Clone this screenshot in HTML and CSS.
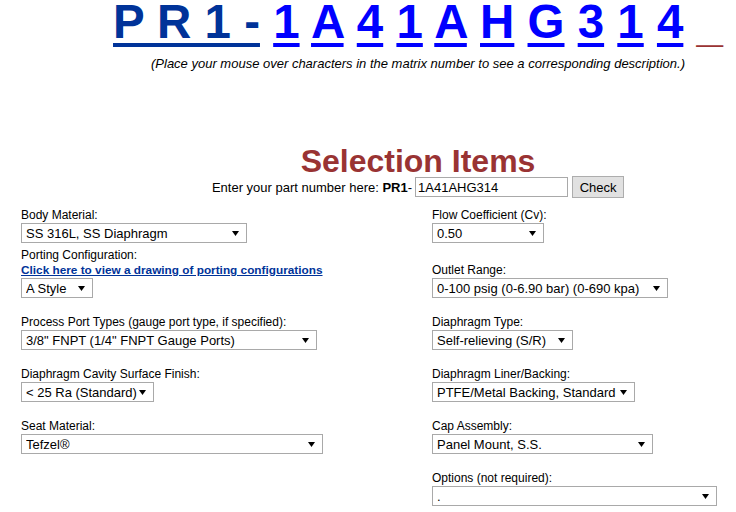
FILE: index.html
```html
<!DOCTYPE html>
<html lang="en">
<head>
    <meta charset="UTF-8">
    <meta name="viewport" content="width=device-width, initial-scale=1.0">
    <title>PR1 Part Number Builder</title>
    <link rel="stylesheet" href="styles.css">
</head>
<body>
    <div class="page">
        <div class="head">
            <div class="matrix">
                <a class="prefix" href="#">P R 1 -</a>
                <a class="ch" href="#">1</a>
                <a class="ch" href="#">A</a>
                <a class="ch" href="#">4</a>
                <a class="ch" href="#">1</a>
                <a class="ch" href="#">A</a>
                <a class="ch" href="#">H</a>
                <a class="ch" href="#">G</a>
                <a class="ch" href="#">3</a>
                <a class="ch" href="#">1</a>
                <a class="ch" href="#">4</a>
                <span class="blank">_</span>
            </div>
            <p class="hint">(Place your mouse over characters in the matrix number to see a corresponding description.)</p>

            <h1 class="title">Selection Items</h1>
            <form class="part-row">
                <span class="part-label">Enter your part number here: <b>PR1</b>-</span>
                <input class="part-input" type="text" value="1A41AHG314">
                <button class="check-button" type="button">Check</button>
            </form>
        </div>

        <div class="options">
            <div class="row first">
                <div class="cell">
                    <label>Body Material:</label>
                    <select class="sel-body"><option>SS 316L, SS Diaphragm</option></select>
                </div>
                <div class="cell">
                    <label>Flow Coefficient (Cv):</label>
                    <select class="sel-flow"><option>0.50</option></select>
                </div>
            </div>
            <div class="row tight">
                <div class="cell">
                    <label>Porting Configuration:</label>
                    <a class="drawing-link" href="#">Click here to view a drawing of porting configurations</a>
                    <select class="sel-style"><option>A Style</option></select>
                </div>
                <div class="cell">
                    <label>Outlet Range:</label>
                    <select class="sel-outlet"><option>0-100 psig (0-6.90 bar) (0-690 kpa)</option></select>
                </div>
            </div>
            <div class="row">
                <div class="cell">
                    <label>Process Port Types (gauge port type, if specified):</label>
                    <select class="sel-port"><option>3/8" FNPT (1/4" FNPT Gauge Ports)</option></select>
                </div>
                <div class="cell">
                    <label>Diaphragm Type:</label>
                    <select class="sel-type"><option>Self-relieving (S/R)</option></select>
                </div>
            </div>
            <div class="row">
                <div class="cell">
                    <label>Diaphragm Cavity Surface Finish:</label>
                    <select class="sel-finish"><option>&lt; 25 Ra (Standard)</option></select>
                </div>
                <div class="cell">
                    <label>Diaphragm Liner/Backing:</label>
                    <select class="sel-liner"><option>PTFE/Metal Backing, Standard</option></select>
                </div>
            </div>
            <div class="row">
                <div class="cell">
                    <label>Seat Material:</label>
                    <select class="sel-seat"><option>Tefzel&reg;</option></select>
                </div>
                <div class="cell">
                    <label>Cap Assembly:</label>
                    <select class="sel-cap"><option>Panel Mount, S.S.</option></select>
                </div>
            </div>
            <div class="row">
                <div class="cell"></div>
                <div class="cell">
                    <label>Options (not required):</label>
                    <select class="sel-options"><option>.</option></select>
                </div>
            </div>
        </div>
    </div>
</body>
</html>
```

FILE: styles.css
```css
* {
    margin: 0;
    padding: 0;
    box-sizing: border-box;
}

body {
    font-family: 'Liberation Sans', Arial, sans-serif;
    background: #fff;
    color: #000;
    overflow: hidden;
}

.page {
    width: 728px;
    margin-left: 8px;
}

/* the centred block sits right of the page middle */
.head {
    padding-left: 92px;
}

/* matrix number */
.matrix {
    text-align: center;
    font-size: 47.5px;
    font-weight: bold;
    line-height: 44px;
    white-space: nowrap;
}

.matrix a {
    text-decoration: underline;
    text-decoration-thickness: 4px;
    text-underline-offset: 5px;
}

.prefix {
    color: #003399;
}

.ch {
    color: #0000ff;
}

.blank {
    color: #993333;
    line-height: 0;
    vertical-align: -3px;
}

.hint {
    margin-top: 12px;
    text-align: center;
    font-size: 13px;
    font-style: italic;
    line-height: 15px;
}

/* part number entry */
.title {
    margin-top: 76px;
    text-align: center;
    color: #993333;
    font-size: 32px;
    line-height: 28px;
}

.part-row {
    margin-top: 1px;
    display: flex;
    align-items: center;
    justify-content: center;
    height: 22px;
    font-size: 13px;
}

.part-label {
    line-height: 15px;
}

.part-input {
    margin-left: 3px;
    width: 153px;
    height: 20px;
    padding: 0 2px;
    border: 1px solid #a9a9a9;
    font: 13px 'Liberation Sans', Arial, sans-serif;
    color: #000;
}

.check-button {
    margin-left: 4px;
    width: 52px;
    height: 22px;
    border: 1px solid #adadad;
    background: #e1e1e1;
    font: 13px 'Liberation Sans', Arial, sans-serif;
    color: #000;
}

/* selection grid */
.options {
    margin-top: 10px;
}

.row {
    display: grid;
    grid-template-columns: 411px 1fr;
    margin-top: 17px;
}

.row.first {
    margin-top: 0;
}

.row.tight {
    margin-top: 5px;
}

.cell {
    display: flex;
    flex-direction: column;
    justify-content: flex-end;
    align-items: flex-start;
    padding-left: 13px;
}

.cell label {
    display: block;
    font-size: 12px;
    line-height: 15px;
}

.drawing-link {
    display: block;
    font-size: 11.8px;
    font-weight: bold;
    line-height: 15px;
    color: #003399;
}

select {
    appearance: none;
    height: 20px;
    padding: 0 14px 0 4px;
    border: 1px solid #a9a9a9;
    border-radius: 0;
    background: #fff url("data:image/svg+xml,%3Csvg xmlns='http://www.w3.org/2000/svg' width='7' height='5'%3E%3Cpath d='M0 0h7L3.5 5z' fill='black'/%3E%3C/svg%3E") no-repeat right 7px center;
    font: 13px 'Liberation Sans', Arial, sans-serif;
    color: #000;
}

.sel-body { width: 226px; }
.sel-style { width: 72px; }
.sel-port { width: 296px; }
.sel-finish { width: 133px; }
.sel-seat { width: 302px; }
.sel-flow { width: 112px; }
.sel-outlet { width: 236px; }
.sel-type { width: 141px; }
.sel-liner { width: 203px; }
.sel-cap { width: 221px; }
.sel-options { width: 285px; }
```
